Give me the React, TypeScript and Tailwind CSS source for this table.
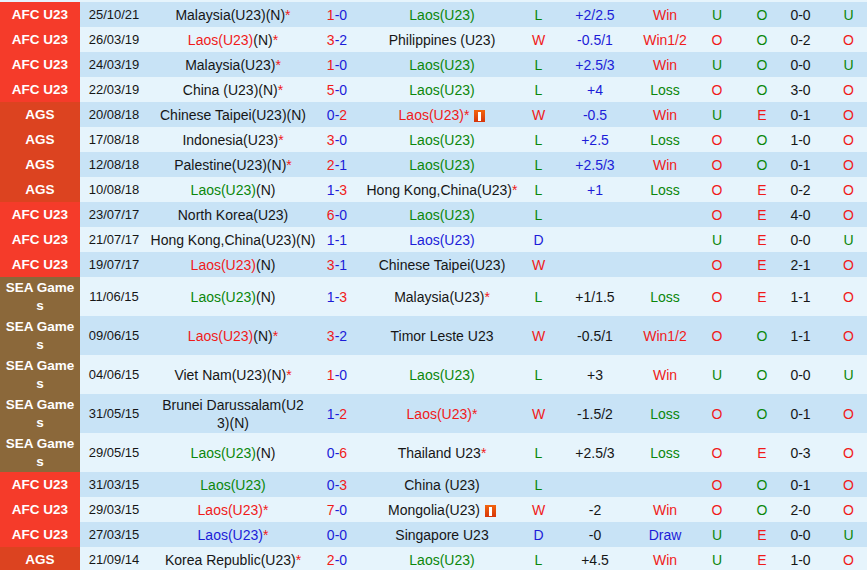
import React from "react";

type Col = "r" | "g" | "b" | "k";

const TXT: Record<Col, string> = {
  r: "text-[#f01a1a]",
  g: "text-[#0b870b]",
  b: "text-[#1c1cd8]",
  k: "text-[#161616]",
};

interface Team {
  name: string;
  c: Col;
  n?: boolean; // neutral
  star?: boolean;
  flag?: boolean;
  lines?: string[];
}

interface Row {
  lg: "AFC" | "AGS" | "SEA";
  date: string;
  home: Team;
  hs: number;
  as: number;
  away: Team;
  res: "W" | "L" | "D";
  hcp: string;
  hcpBlue?: boolean;
  win: string;
  uo: "U" | "O";
  oe: "O" | "E";
  ht: string;
  last: "U" | "O";
}

const LAOS = "Laos(U23)";

const rows: Row[] = [
  { lg: "AFC", date: "25/10/21", home: { name: "Malaysia(U23)", c: "k", n: true, star: true }, hs: 1, as: 0, away: { name: LAOS, c: "g" }, res: "L", hcp: "+2/2.5", hcpBlue: true, win: "Win", uo: "U", oe: "O", ht: "0-0", last: "U" },
  { lg: "AFC", date: "26/03/19", home: { name: LAOS, c: "r", n: true, star: true }, hs: 3, as: 2, away: { name: "Philippines (U23)", c: "k" }, res: "W", hcp: "-0.5/1", hcpBlue: true, win: "Win1/2", uo: "O", oe: "O", ht: "0-2", last: "O" },
  { lg: "AFC", date: "24/03/19", home: { name: "Malaysia(U23)", c: "k", star: true }, hs: 1, as: 0, away: { name: LAOS, c: "g" }, res: "L", hcp: "+2.5/3", hcpBlue: true, win: "Win", uo: "U", oe: "O", ht: "0-0", last: "U" },
  { lg: "AFC", date: "22/03/19", home: { name: "China (U23)", c: "k", n: true, star: true }, hs: 5, as: 0, away: { name: LAOS, c: "g" }, res: "L", hcp: "+4", hcpBlue: true, win: "Loss", uo: "O", oe: "O", ht: "3-0", last: "O" },
  { lg: "AGS", date: "20/08/18", home: { name: "Chinese Taipei(U23)", c: "k", n: true }, hs: 0, as: 2, away: { name: LAOS, c: "r", star: true, flag: true }, res: "W", hcp: "-0.5", hcpBlue: true, win: "Win", uo: "U", oe: "E", ht: "0-1", last: "O" },
  { lg: "AGS", date: "17/08/18", home: { name: "Indonesia(U23)", c: "k", star: true }, hs: 3, as: 0, away: { name: LAOS, c: "g" }, res: "L", hcp: "+2.5", hcpBlue: true, win: "Loss", uo: "O", oe: "O", ht: "1-0", last: "O" },
  { lg: "AGS", date: "12/08/18", home: { name: "Palestine(U23)", c: "k", n: true, star: true }, hs: 2, as: 1, away: { name: LAOS, c: "g" }, res: "L", hcp: "+2.5/3", hcpBlue: true, win: "Win", uo: "O", oe: "O", ht: "0-1", last: "O" },
  { lg: "AGS", date: "10/08/18", home: { name: LAOS, c: "g", n: true }, hs: 1, as: 3, away: { name: "Hong Kong,China(U23)", c: "k", star: true }, res: "L", hcp: "+1", hcpBlue: true, win: "Loss", uo: "O", oe: "E", ht: "0-2", last: "O" },
  { lg: "AFC", date: "23/07/17", home: { name: "North Korea(U23)", c: "k" }, hs: 6, as: 0, away: { name: LAOS, c: "g" }, res: "L", hcp: "", win: "", uo: "O", oe: "E", ht: "4-0", last: "O" },
  { lg: "AFC", date: "21/07/17", home: { name: "Hong Kong,China(U23)", c: "k", n: true }, hs: 1, as: 1, away: { name: LAOS, c: "b" }, res: "D", hcp: "", win: "", uo: "U", oe: "E", ht: "0-0", last: "U" },
  { lg: "AFC", date: "19/07/17", home: { name: LAOS, c: "r", n: true }, hs: 3, as: 1, away: { name: "Chinese Taipei(U23)", c: "k" }, res: "W", hcp: "", win: "", uo: "O", oe: "E", ht: "2-1", last: "O" },
  { lg: "SEA", date: "11/06/15", home: { name: LAOS, c: "g", n: true }, hs: 1, as: 3, away: { name: "Malaysia(U23)", c: "k", star: true }, res: "L", hcp: "+1/1.5", win: "Loss", uo: "O", oe: "E", ht: "1-1", last: "O" },
  { lg: "SEA", date: "09/06/15", home: { name: LAOS, c: "r", n: true, star: true }, hs: 3, as: 2, away: { name: "Timor Leste U23", c: "k" }, res: "W", hcp: "-0.5/1", win: "Win1/2", uo: "O", oe: "O", ht: "1-1", last: "O" },
  { lg: "SEA", date: "04/06/15", home: { name: "Viet Nam(U23)", c: "k", n: true, star: true }, hs: 1, as: 0, away: { name: LAOS, c: "g" }, res: "L", hcp: "+3", win: "Win", uo: "U", oe: "O", ht: "0-0", last: "U" },
  { lg: "SEA", date: "31/05/15", home: { name: "", c: "k", lines: ["Brunei Darussalam(U2", "3)(N)"] }, hs: 1, as: 2, away: { name: LAOS, c: "r", star: true }, res: "W", hcp: "-1.5/2", win: "Loss", uo: "O", oe: "O", ht: "0-1", last: "O" },
  { lg: "SEA", date: "29/05/15", home: { name: LAOS, c: "g", n: true }, hs: 0, as: 6, away: { name: "Thailand U23", c: "k", star: true }, res: "L", hcp: "+2.5/3", win: "Loss", uo: "O", oe: "E", ht: "0-3", last: "O" },
  { lg: "AFC", date: "31/03/15", home: { name: LAOS, c: "g" }, hs: 0, as: 3, away: { name: "China (U23)", c: "k" }, res: "L", hcp: "", win: "", uo: "O", oe: "O", ht: "0-1", last: "O" },
  { lg: "AFC", date: "29/03/15", home: { name: LAOS, c: "r", star: true }, hs: 7, as: 0, away: { name: "Mongolia(U23)", c: "k", flag: true }, res: "W", hcp: "-2", win: "Win", uo: "O", oe: "O", ht: "2-0", last: "O" },
  { lg: "AFC", date: "27/03/15", home: { name: LAOS, c: "b", star: true }, hs: 0, as: 0, away: { name: "Singapore U23", c: "k" }, res: "D", hcp: "-0", win: "Draw", uo: "U", oe: "E", ht: "0-0", last: "U" },
  { lg: "AGS", date: "21/09/14", home: { name: "Korea Republic(U23)", c: "k", star: true }, hs: 2, as: 0, away: { name: LAOS, c: "g" }, res: "L", hcp: "+4.5", win: "Win", uo: "U", oe: "E", ht: "1-0", last: "O" },
];

const LG_BG = {
  AFC: "bg-[#f53b2a]",
  AGS: "bg-[#dc4320]",
  SEA: "bg-[#8b683a]",
};

const Flag = () => (
  <span className="ml-[5px] inline-flex h-[12px] w-[11px] items-center justify-center bg-gradient-to-b from-[#f2640e] to-[#d6340a] align-[-1px]">
    <span className="h-[9px] w-[3px] bg-white" />
  </span>
);

const TeamCell = ({ t }: { t: Team }) => {
  if (t.lines) {
    return (
      <div className="text-center leading-[18px] text-[#161616]">
        {t.lines.map((l) => (
          <div key={l}>{l}</div>
        ))}
      </div>
    );
  }
  return (
    <div className="whitespace-nowrap text-center">
      <span className={TXT[t.c]}>{t.name}</span>
      {t.n && <span className={TXT.k}>(N)</span>}
      {t.star && <span className={TXT.r}>*</span>}
      {t.flag && <Flag />}
    </div>
  );
};

const Score = ({ h, a }: { h: number; a: number }) => {
  if (h > a)
    return (
      <span>
        <span className={TXT.r}>{h}</span>
        <span className={TXT.b}>-{a}</span>
      </span>
    );
  if (h < a)
    return (
      <span>
        <span className={TXT.b}>{h}-</span>
        <span className={TXT.r}>{a}</span>
      </span>
    );
  return (
    <span className={TXT.b}>
      {h}-{a}
    </span>
  );
};

const resCol = (r: string): Col => (r === "W" ? "r" : r === "L" ? "g" : "b");
const winCol = (w: string): Col => (w.startsWith("Win") ? "r" : w === "Loss" ? "g" : "b");

const GRID = "grid grid-cols-[80px_68px_170px_38px_172px_21px_92px_48px_56px_34px_43px_53px]";

export default function App() {
  return (
    <div className="w-[867px] h-[570px] overflow-hidden bg-[#e6f4fc] font-['Liberation_Sans',Arial,sans-serif] text-[14px] text-[#161616]">
      <div className="h-[2px] w-[875px] bg-[#e6f4fc]" />
      {rows.map((r, i) => {
        const tall = r.lg === "SEA";
        const rowBg = i % 2 === 0 ? "bg-[#c8e3f6]" : "bg-[#e6f4fc]";
        return (
          <div
            key={i}
            className={`${GRID} w-[875px] items-center ${rowBg} ${tall ? "h-[39px]" : "h-[25px]"} leading-[18px]`}
          >
            <div
              className={`${LG_BG[r.lg]} flex h-full items-center justify-center text-center text-[13.5px] font-bold leading-[18px] text-white`}
            >
              {r.lg === "SEA" ? (
                <span>
                  SEA Game
                  <br />s
                </span>
              ) : r.lg === "AFC" ? (
                "AFC U23"
              ) : (
                "AGS"
              )}
            </div>
            <div className="text-center text-[13px]">{r.date}</div>
            <TeamCell t={r.home} />
            <div className="text-center">
              <Score h={r.hs} a={r.as} />
            </div>
            <TeamCell t={r.away} />
            <div className={`text-center ${TXT[resCol(r.res)]}`}>{r.res}</div>
            <div className={`text-center ${r.hcpBlue ? TXT.b : TXT.k}`}>{r.hcp}</div>
            <div className={`text-center ${TXT[winCol(r.win)]}`}>{r.win}</div>
            <div className={`text-center ${r.uo === "U" ? TXT.g : TXT.r}`}>{r.uo}</div>
            <div className={`text-center ${r.oe === "O" ? TXT.g : TXT.r}`}>{r.oe}</div>
            <div className="text-center">{r.ht}</div>
            <div className={`text-center ${r.last === "U" ? TXT.g : TXT.r}`}>{r.last}</div>
          </div>
        );
      })}
    </div>
  );
}
